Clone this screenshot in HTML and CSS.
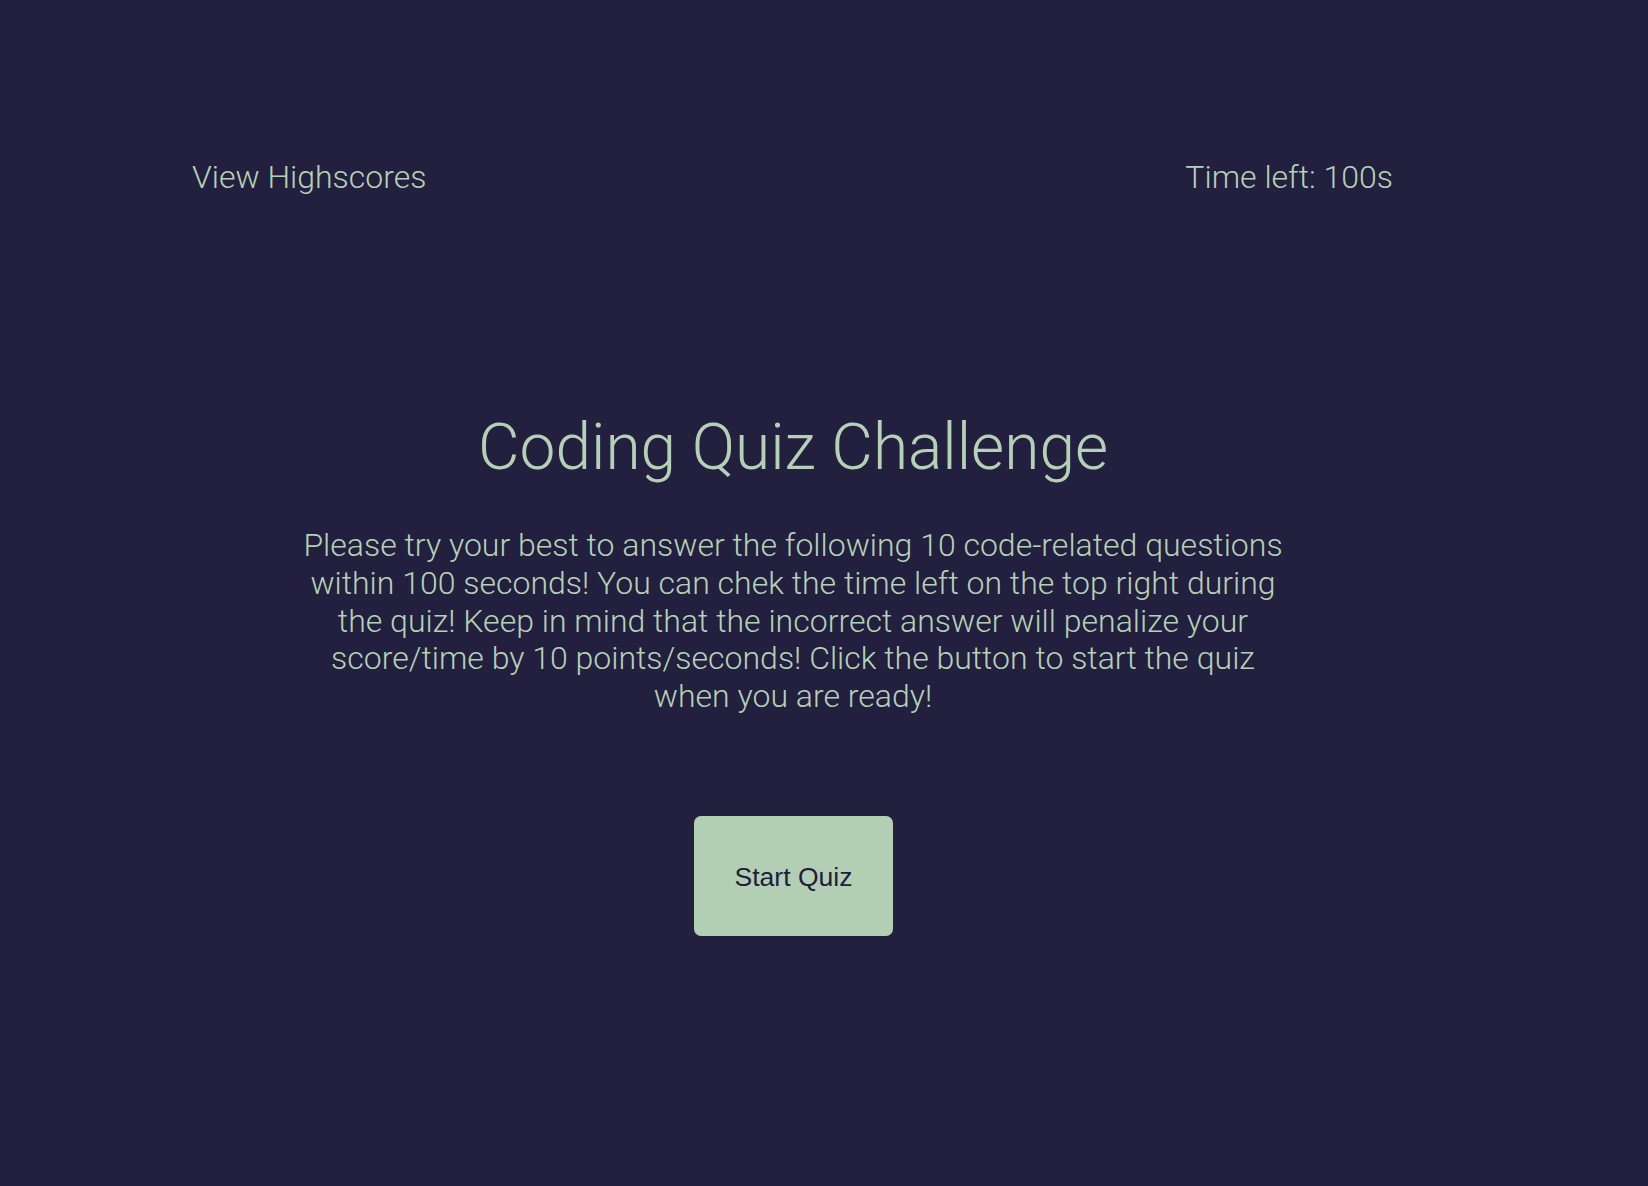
FILE: index.html
```html
<!DOCTYPE html>
<html lang="en">
<head>
<meta charset="utf-8">
<title>Coding Quiz Challenge</title>
<link rel="stylesheet" href="styles.css">
</head>
<body>
<div class="page">
  <header class="top-bar">
    <a class="highscores-link" href="#">View Highscores</a>
    <div class="timer">Time left: 100s</div>
  </header>
  <main class="intro">
    <h1 class="intro-title">Coding Quiz Challenge</h1>
    <p class="intro-text">Please try your best to answer the following 10 code-related questions within 100 seconds! You can chek the time left on the top right during the quiz! Keep in mind that the incorrect answer will penalize your score/time by 10 points/seconds! Click the button to start the quiz when you are ready!</p>
    <button class="start-button" type="button">Start Quiz</button>
  </main>
</div>
</body>
</html>
```

FILE: styles.css
```css
html, body {
  margin: 0;
  padding: 0;
  background: #221f3f;
}

body {
  min-height: 1186px;
  font-family: Roboto, "Noto Sans", sans-serif;
  font-weight: 300;
  color: #b5d1b5;
}

.page {
  width: 1586px;
}

.top-bar {
  display: flex;
  justify-content: space-between;
  align-items: flex-start;
  padding: 158px 193px 0 192px;
  font-size: 32px;
}

.highscores-link {
  color: #b5d1b5;
  text-decoration: none;
}

.intro {
  display: flex;
  flex-direction: column;
  align-items: center;
  text-align: center;
  padding-top: 211px;
}

.intro-title {
  margin: 0;
  font-size: 64px;
  font-weight: 300;
  line-height: 82px;
}

.intro-text {
  margin: 38px 0 0;
  max-width: 990px;
  font-size: 32px;
  line-height: 37.8px;
}

.start-button {
  margin-top: 100px;
  margin-left: 1px;
  width: 199px;
  height: 120px;
  padding: 4px 0 0;
  border: none;
  border-radius: 7px;
  background: #b3cfb3;
  color: #201d3e;
  font-family: "Liberation Sans", Arial, sans-serif;
  font-size: 26.5px;
  font-weight: 400;
  cursor: pointer;
}
```
